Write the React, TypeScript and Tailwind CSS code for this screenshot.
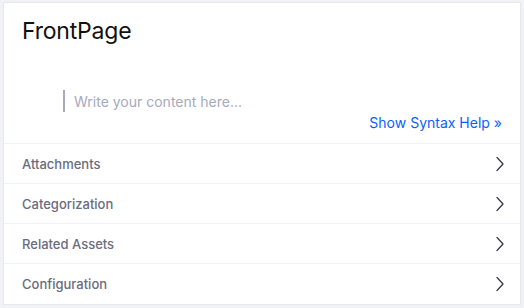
import React from "react";

const rows = ["Attachments", "Categorization", "Related Assets", "Configuration"];

function Chevron() {
  return (
    <svg width="8" height="16" viewBox="0 0 8 16" fill="none" className="text-[#393a4a]">
      <path d="M1 1.5 L7 8 L1 14.5" stroke="currentColor" strokeWidth="1.3" strokeLinecap="round" strokeLinejoin="round" />
    </svg>
  );
}

export default function App() {
  return (
    <div
      className="w-[524px] h-[308px] bg-[#f1f2f5] pt-[3px] pl-[4px] pr-[4px] pb-[4px]"
      style={{ fontFamily: "Inter, 'Noto Sans', sans-serif" }}
    >
      <div className="w-[516px] h-[301px] bg-white shadow-[0_0_0_1px_#e7e7ed] flex flex-col">
        <div className="h-[140px] flex flex-col">
          <div className="pl-[18px] pt-[14px] text-[23px] leading-[28px] text-[#111111] tracking-[-0.2px]">FrontPage</div>
          <div className="mt-[45px] ml-[59px] flex items-center h-[22px]">
            <div className="w-[2px] h-[22px] bg-[#a7a9bc]" />
            <span className="ml-[9px] text-[14px] text-[#a7a9bc]">Write your content here...</span>
          </div>
          <div className="mt-0 pr-[18px] flex justify-end">
            <span className="text-[14px] leading-[22px] text-[#0b5fff]">Show Syntax Help »</span>
          </div>
        </div>
        {rows.map((r) => (
          <div key={r} className="h-[40px] border-t border-[#f1f2f5] flex items-center justify-between pl-[18px] pr-[16px]">
            <span className="text-[13px] font-medium text-[#6b6c7e] pt-[2px]">{r}</span>
            <Chevron />
          </div>
        ))}
      </div>
    </div>
  );
}
